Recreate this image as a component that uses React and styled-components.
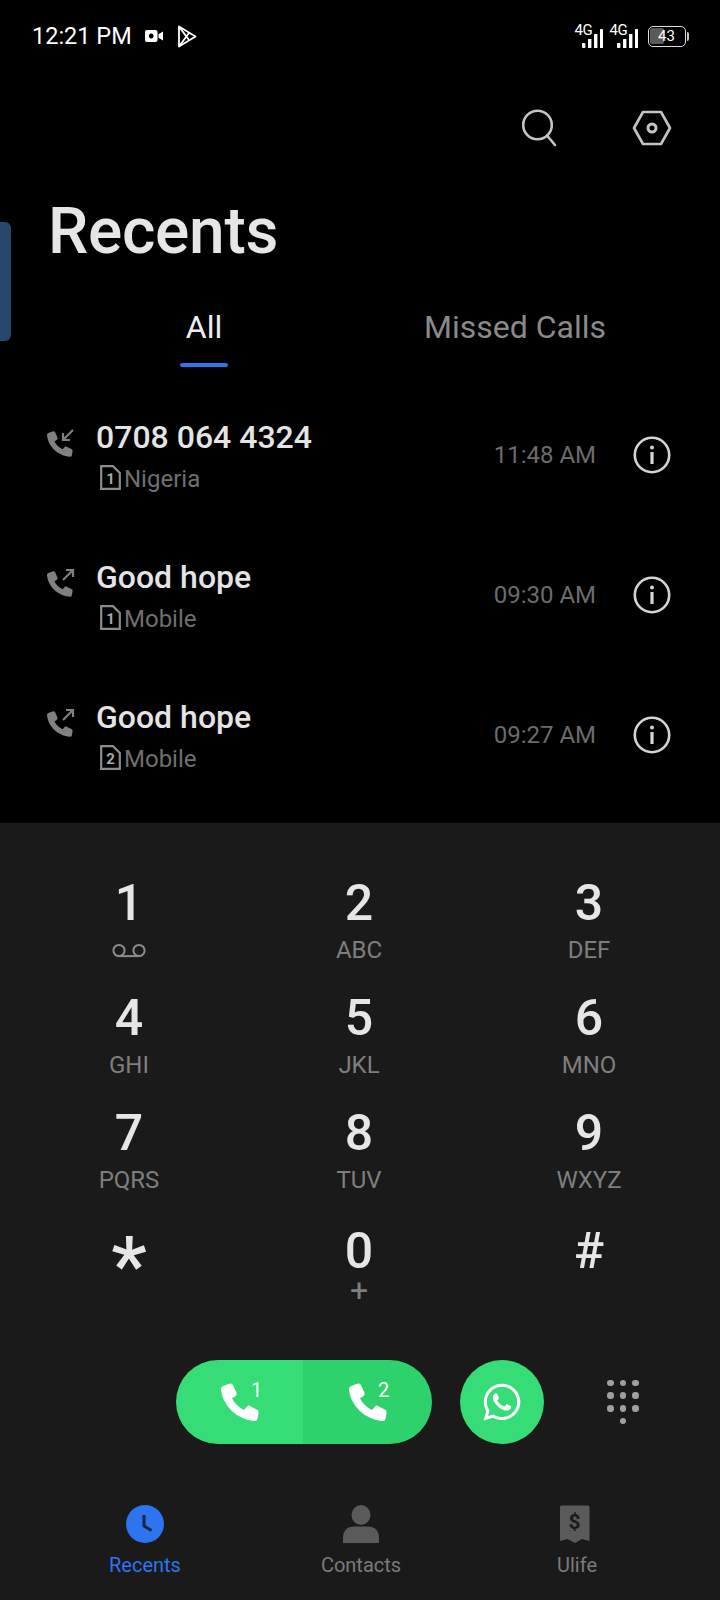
import React from 'react';
import styled, { createGlobalStyle } from 'styled-components';
import { FaWhatsapp } from 'react-icons/fa';

const GlobalStyle = createGlobalStyle`
  html, body {
    margin: 0;
    padding: 0;
    background: #000;
  }
  * {
    box-sizing: border-box;
  }
`;

const PHONE = 'M2 3 L9 .5 Q11 0 12 2 L15.5 10 Q16 12 14.5 13 L11 15.5 Q15 23 23 27 L26 23.5 Q27.5 22 29 23 L36.5 27 Q38 28 37.5 30 L36.5 36 Q36 38 34 38 C16 37 1 22 0 6 Q0 4 2 3 Z';

const calls = [
  { name: '0708 064 4324', sim: 1, place: 'Nigeria', time: '11:48 AM', incoming: true },
  { name: 'Good hope', sim: 1, place: 'Mobile', time: '09:30 AM' },
  { name: 'Good hope', sim: 2, place: 'Mobile', time: '09:27 AM' },
];

const keys = [
  ['1', 'voicemail'], ['2', 'ABC'], ['3', 'DEF'],
  ['4', 'GHI'], ['5', 'JKL'], ['6', 'MNO'],
  ['7', 'PQRS'], ['8', 'TUV'], ['9', 'WXYZ'],
  ['*', ''], ['0', '+'], ['#', ''],
];

const Signal = () => (
  <SignalWrap>
    <FourG>4G</FourG>
    <svg width="21" height="19" viewBox="0 0 21 19" fill="#fff">
      <rect x="0" y="14" width="3.4" height="5" rx="1" />
      <rect x="6" y="10" width="3.4" height="9" rx=".6" />
      <rect x="12" y="5" width="3.4" height="14" rx=".6" />
      <rect x="18" y="0" width="3" height="19" rx=".6" />
    </svg>
  </SignalWrap>
);

const CallIcon = ({ incoming }) => (
  <svg width="30" height="29" viewBox="0 0 30 29" fill="none">
    <path d={PHONE} fill="#808080" transform="translate(1 3) scale(.68)" />
    {incoming ? (
      <path d="M27 2 L17 12 M17 5 V12 H24" stroke="#808080" strokeWidth="2.2" />
    ) : (
      <path d="M17 12 L27 2 M20 2 H27 V9" stroke="#808080" strokeWidth="2.2" />
    )}
  </svg>
);

const SimIcon = ({ n }) => (
  <SimBox width="21" height="25" viewBox="0 0 21 25" fill="none">
    <path d="M1.2 1.2 H13 L19.8 8 V23.8 H1.2 Z" stroke="#8c8c8c" strokeWidth="2.2" />
    <text x="10.5" y="19" textAnchor="middle" fill="#a8a8a8" fontFamily="Roboto, sans-serif" fontWeight="700" fontSize="15">{n}</text>
  </SimBox>
);

const InfoIcon = () => (
  <svg width="38" height="38" viewBox="0 0 38 38" fill="none">
    <circle cx="19" cy="19" r="17.2" stroke="#d4d4d4" strokeWidth="2.6" />
    <rect x="17.4" y="16" width="3.2" height="12" fill="#d4d4d4" />
    <circle cx="19" cy="11.4" r="2" fill="#d4d4d4" />
  </svg>
);

export default function App() {
  return (
    <Page>
      <GlobalStyle />
      <SideHandle />
      <StatusBar>
        <StatusLeft>
          <Clock>12:21 PM</Clock>
          <svg width="20" height="14" viewBox="0 0 19 14" fill="#fff">
            <path d="M2.5 1 H11 Q13 1 13 3 V11 Q13 13 11 13 H2.5 Q.5 13 .5 11 V3 Q.5 1 2.5 1 Z M6.7 4.6 a2.4 2.4 0 1 0 .01 0 Z" fillRule="evenodd" />
            <path d="M14 5.2 L18.5 2.5 V11.5 L14 8.8 Z" />
          </svg>
          <PlayIcon width="20" height="23" viewBox="0 0 20 23" fill="none" stroke="#fff" strokeWidth="1.8" strokeLinejoin="round">
            <path d="M2 1.500 L18.500 11.500 L2 21.500 Z" />
            <path d="M2 1.500 L12 15 M2 21.500 L12 8" />
          </PlayIcon>
        </StatusLeft>
        <StatusRight>
          <Signal />
          <Signal />
          <Battery>
            <BatteryBody>
              <BatteryFill style={{ width: '43%' }} />
              <BatteryText>43</BatteryText>
            </BatteryBody>
            <BatteryCap />
          </Battery>
        </StatusRight>
      </StatusBar>

      <Toolbar>
        <svg width="38" height="38" viewBox="0 0 38 38" fill="none" stroke="#c4c4c4" strokeWidth="2.6" strokeLinecap="round">
          <circle cx="17.500" cy="16" r="14.300" />
          <path d="M27 26.500 L35 36" />
        </svg>
        <svg width="40" height="36" viewBox="0 0 40 36" fill="none" stroke="#c4c4c4" strokeWidth="2.6" strokeLinejoin="round">
          <path d="M11 2 H29 L38 18 L29 34 H11 L2 18 Z" />
          <circle cx="20" cy="18" r="4" strokeWidth="3" />
        </svg>
      </Toolbar>

      <Title>Recents</Title>

      <Tabs>
        <Tab $active>
          All
          <TabLine />
        </Tab>
        <Tab $wide>Missed Calls</Tab>
      </Tabs>

      <CallList>
        {calls.map((c, i) => (
          <CallRow key={i}>
            <CallIconBox>
              <CallIcon incoming={c.incoming} />
            </CallIconBox>
            <CallInfo>
              <CallName>{c.name}</CallName>
              <CallSub>
                <SimIcon n={c.sim} />
                {c.place}
              </CallSub>
            </CallInfo>
            <CallTime>{c.time}</CallTime>
            <InfoIcon />
          </CallRow>
        ))}
      </CallList>

      <DialPanel>
        <Keypad>
          {keys.map(([digit, sub]) => (
            <Key key={digit}>
              <Digit $star={digit === '*'}>{digit}</Digit>
              <KeySub $plus={sub === '+'}>
                {sub === 'voicemail' ? (
                  <svg width="34" height="15" viewBox="0 0 34 15" fill="none" stroke="#8c8c8c" strokeWidth="2">
                    <circle cx="7" cy="7.500" r="5.600" />
                    <circle cx="27" cy="7.500" r="5.600" />
                    <path d="M7 13.100 H27" />
                  </svg>
                ) : sub}
              </KeySub>
            </Key>
          ))}
        </Keypad>

        <Actions>
          <CallPill>
            <SimCall>
              <svg width="38" height="38" viewBox="0 0 38 38" fill="#fff"><path d={PHONE} /></svg>
              <SimNum>1</SimNum>
            </SimCall>
            <SimCall $dark>
              <svg width="38" height="38" viewBox="0 0 38 38" fill="#fff"><path d={PHONE} /></svg>
              <SimNum>2</SimNum>
            </SimCall>
          </CallPill>
          <WhatsAppButton>
            <FaWhatsapp size={42} color="#fff" />
          </WhatsAppButton>
          <DotPad>
            {Array.from({ length: 9 }).map((_, i) => <Dot key={i} />)}
            <Dot $col={2} />
          </DotPad>
        </Actions>

        <BottomNav>
          <NavItem $active>
            <svg width="38" height="38" viewBox="0 0 38 38">
              <circle cx="19" cy="19" r="19" fill="#2d74f0" />
              <path d="M18 10 V21 L25.500 25.500" fill="none" stroke="#16243d" strokeWidth="3" />
            </svg>
            Recents
          </NavItem>
          <NavItem>
            <svg width="38" height="38" viewBox="0 0 38 38" fill="#5a5a5a">
              <ellipse cx="19" cy="10" rx="9.500" ry="10" />
              <path d="M1 38 V33 Q1 21.500 13 21.500 H25 Q37 21.500 37 33 V38 Z" />
            </svg>
            Contacts
          </NavItem>
          <NavItem>
            <svg width="38" height="38" viewBox="0 0 38 38">
              <path d="M2 2 Q2 .5 3.500 .5 H30 Q31.500 .5 31.500 2 V36 L24 34 L17 38 L9.500 34 L2 36 Z" fill="#5a5a5a" />
              <text x="16.500" y="24" textAnchor="middle" fill="#1a1a1a" fontFamily="Roboto, sans-serif" fontWeight="700" fontSize="21">$</text>
            </svg>
            Ulife
          </NavItem>
        </BottomNav>
      </DialPanel>
    </Page>
  );
}

const Page = styled.div`
  position: relative;
  display: flex;
  flex-direction: column;
  width: 720px;
  height: 1600px;
  overflow: hidden;
  background: #000;
  font-family: Roboto, "Liberation Sans", sans-serif;
`;

const SideHandle = styled.div`
  position: absolute;
  left: 0;
  top: 222px;
  width: 11px;
  height: 119px;
  background: #26466e;
  border-radius: 0 6px 6px 0;
`;

const StatusBar = styled.div`
  display: flex;
  justify-content: space-between;
  align-items: center;
  height: 72px;
  padding: 0 31px 0 32px;
  color: #fff;
`;

const StatusLeft = styled.div`
  display: flex;
  align-items: center;
  gap: 11px;
`;

const Clock = styled.span`
  font-size: 23.5px;
  margin-right: 1px;
`;

const PlayIcon = styled.svg`
  margin-left: 2px;
`;

const StatusRight = styled.div`
  display: flex;
  align-items: center;
  gap: 7px;
`;

const SignalWrap = styled.div`
  position: relative;
  width: 28px;
  height: 24px;
  display: flex;
  justify-content: flex-end;
  align-items: flex-end;
`;

const FourG = styled.span`
  position: absolute;
  left: 0;
  top: -1px;
  font-size: 15px;
  line-height: 15px;
  letter-spacing: -0.5px;
`;

const Battery = styled.div`
  display: flex;
  align-items: center;
  gap: 1px;
  margin-left: 3px;
`;

const BatteryBody = styled.div`
  position: relative;
  width: 38px;
  height: 21px;
  border: 1.5px solid #ddd;
  border-radius: 5px;
  padding: 1.5px;
  display: flex;
`;

const BatteryFill = styled.div`
  background: #5a5a5a;
  border-radius: 2px;
`;

const BatteryText = styled.span`
  position: absolute;
  left: 0;
  right: 0;
  top: 0;
  text-align: center;
  font-size: 15px;
  line-height: 18px;
  color: #fff;
`;

const BatteryCap = styled.div`
  width: 2.5px;
  height: 9px;
  background: #ccc;
  border-radius: 0 2px 2px 0;
`;

const Toolbar = styled.div`
  display: flex;
  justify-content: flex-end;
  align-items: center;
  gap: 74px;
  height: 38px;
  margin-top: 37px;
  padding-right: 48px;
`;

const Title = styled.h1`
  margin: 41px 0 0 48px;
  font-size: 64px;
  line-height: 88px;
  font-weight: 500;
  color: #e6e6e6;
  letter-spacing: -0.3px;
`;

const Tabs = styled.div`
  display: flex;
  margin-top: 25px;
  height: 60px;
`;

const Tab = styled.div`
  position: relative;
  width: ${p => (p.$wide ? '214px' : '408px')};
  white-space: nowrap;
  text-align: center;
  font-size: 32px;
  line-height: 52px;
  color: ${p => (p.$active ? '#eeeeee' : '#8a8a8a')};
`;

const TabLine = styled.div`
  position: absolute;
  left: 180px;
  bottom: -6px;
  width: 48px;
  height: 4px;
  border-radius: 2px;
  background: #2d74f0;
`;

const CallList = styled.div`
  display: flex;
  flex-direction: column;
  margin-top: 24px;
  height: 438px;
`;

const CallRow = styled.div`
  display: flex;
  align-items: center;
  height: 140px;
  padding: 0 49px 0 46px;
`;

const CallIconBox = styled.div`
  width: 50px;
  display: flex;
  margin-top: -26px;
`;

const CallInfo = styled.div`
  flex: 1;
  display: flex;
  flex-direction: column;
  gap: 8px;
`;

const CallName = styled.div`
  font-size: 32px;
  line-height: 40px;
  font-weight: 500;
  color: #e4e4e4;
`;

const CallSub = styled.div`
  display: flex;
  align-items: center;
  gap: 3px;
  padding-left: 4px;
  font-size: 24px;
  line-height: 28px;
  color: #6f6f6f;
`;

const SimBox = styled.svg`
  margin-top: -3px;
`;

const CallTime = styled.div`
  margin-right: 37px;
  font-size: 24px;
  color: #6b6b6b;
`;

const DialPanel = styled.div`
  flex: 1;
  display: flex;
  flex-direction: column;
  background: #1a1a1a;
`;

const Keypad = styled.div`
  display: grid;
  grid-template-columns: repeat(3, 230px);
  grid-template-rows: 115px 115px 118px 112px;
  padding: 50px 0 0 14px;
`;

const Key = styled.div`
  display: flex;
  flex-direction: column;
  align-items: center;
`;

const Digit = styled.div`
  font-size: ${p => (p.$star ? '80px' : '50px')};
  line-height: 60px;
  height: 60px;
  font-weight: 500;
  color: #e6e6e6;
  padding-top: ${p => (p.$star ? '15px' : '0')};
`;

const KeySub = styled.div`
  display: flex;
  align-items: center;
  justify-content: center;
  height: ${p => (p.$plus ? '18px' : '30px')};
  line-height: ${p => (p.$plus ? '18px' : '30px')};
  margin-top: ${p => (p.$plus ? '0' : '2px')};
  font-size: ${p => (p.$plus ? '32px' : '24px')};
  color: #7e7e7e;
`;

const Actions = styled.div`
  display: flex;
  align-items: center;
  margin-top: 27px;
  padding-left: 176px;
`;

const CallPill = styled.div`
  display: flex;
  width: 256px;
  height: 84px;
  border-radius: 42px;
  overflow: hidden;
`;

const SimCall = styled.div`
  display: flex;
  align-items: center;
  justify-content: center;
  flex: ${p => (p.$dark ? '0 0 129px' : '0 0 127px')};
  position: relative;
  background: ${p => (p.$dark ? '#2dd26c' : '#36dc75')};
`;

const SimNum = styled.span`
  position: absolute;
  left: 75px;
  top: 19px;
  font-size: 20px;
  line-height: 22px;
  color: #fff;
`;

const WhatsAppButton = styled.div`
  display: flex;
  align-items: center;
  justify-content: center;
  width: 84px;
  height: 84px;
  margin-left: 28px;
  border-radius: 50%;
  background: #36dc75;
`;

const DotPad = styled.div`
  display: grid;
  grid-template-columns: repeat(3, 6.5px);
  grid-auto-rows: 6.5px;
  gap: 6.2px;
  margin-left: 63px;
`;

const Dot = styled.div`
  width: 6.5px;
  height: 6.5px;
  border-radius: 50%;
  background: #a0a0a0;
  grid-column: ${p => p.$col || 'auto'};
`;

const BottomNav = styled.div`
  display: grid;
  grid-template-columns: repeat(3, 216px);
  padding: 61px 0 0 37px;
`;

const NavItem = styled.div`
  display: flex;
  flex-direction: column;
  align-items: center;
  gap: 10px;
  font-size: 20px;
  line-height: 24px;
  color: ${p => (p.$active ? '#2d74f0' : '#7a7a7a')};
`;
